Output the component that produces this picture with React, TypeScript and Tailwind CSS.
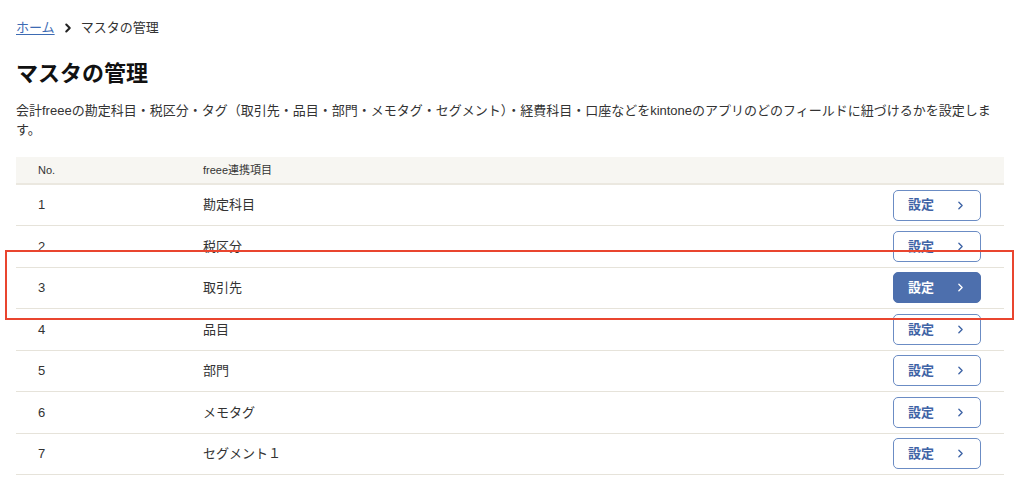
import { ChevronRight } from "lucide-react";

const ITEMS = ["勘定科目", "税区分", "取引先", "品目", "部門", "メモタグ", "セグメント１"];

const font = {
  fontFamily: '"Liberation Sans", "Noto Sans CJK JP", sans-serif',
};

function SettingButton({ active }: { active?: boolean }) {
  return (
    <button
      className={`flex h-[31px] w-[88px] items-center justify-between rounded-[5px] border pl-[14px] pr-[13px] text-[13px] font-bold ${
        active
          ? "border-[#4d6fad] bg-[#4d6fad] text-white"
          : "border-[#6b8cc4] bg-white text-[#3f64a6]"
      }`}
    >
      <span>設定</span>
      <ChevronRight size={13} strokeWidth={2.5} />
    </button>
  );
}

export default function App() {
  return (
    <div className="relative min-h-[480px] bg-white px-4 text-[#333]" style={font}>
      <nav className="flex items-center gap-[6px] pt-[19px] text-[13px] leading-[18px]">
        <a className="text-[#3d6bb3] underline underline-offset-2" href="#">
          ホーム
        </a>
        <ChevronRight size={14} strokeWidth={3.5} className="text-[#222]" />
        <span>マスタの管理</span>
      </nav>
      <h1 className="mt-[22px] text-[22px] font-bold leading-[30px] text-[#111]">マスタの管理</h1>
      <p className="mt-[12px] pr-[2px] text-[13px] leading-[19px]">
        会計freeeの勘定科目・税区分・タグ（取引先・品目・部門・メモタグ・セグメント）・経費科目・口座などをkintoneのアプリのどのフィールドに紐づけるかを設定します。
      </p>
      <table className="mt-[18px] w-[988px] border-collapse text-[12px]">
        <thead>
          <tr className="h-[27px] border-b-2 border-[#ebe8e0] bg-[#f7f6f2] text-left text-[11px]">
            <th className="w-[187px] pl-[22px] font-normal">No.</th>
            <th className="font-normal">freee連携項目</th>
            <th />
          </tr>
        </thead>
        <tbody>
          {ITEMS.map((item, i) => (
            <tr key={item} className="h-[41.5px] border-b border-[#e6e3da] text-[13px]">
              <td className="pl-[22px]">{i + 1}</td>
              <td>{item}</td>
              <td className="pr-[23px]">
                <div className="flex justify-end">
                  <SettingButton active={i === 2} />
                </div>
              </td>
            </tr>
          ))}
        </tbody>
      </table>
      <div className="pointer-events-none absolute left-[5px] top-[250px] h-[70px] w-[1009px] border-2 border-[#e9452f]" />
    </div>
  );
}
